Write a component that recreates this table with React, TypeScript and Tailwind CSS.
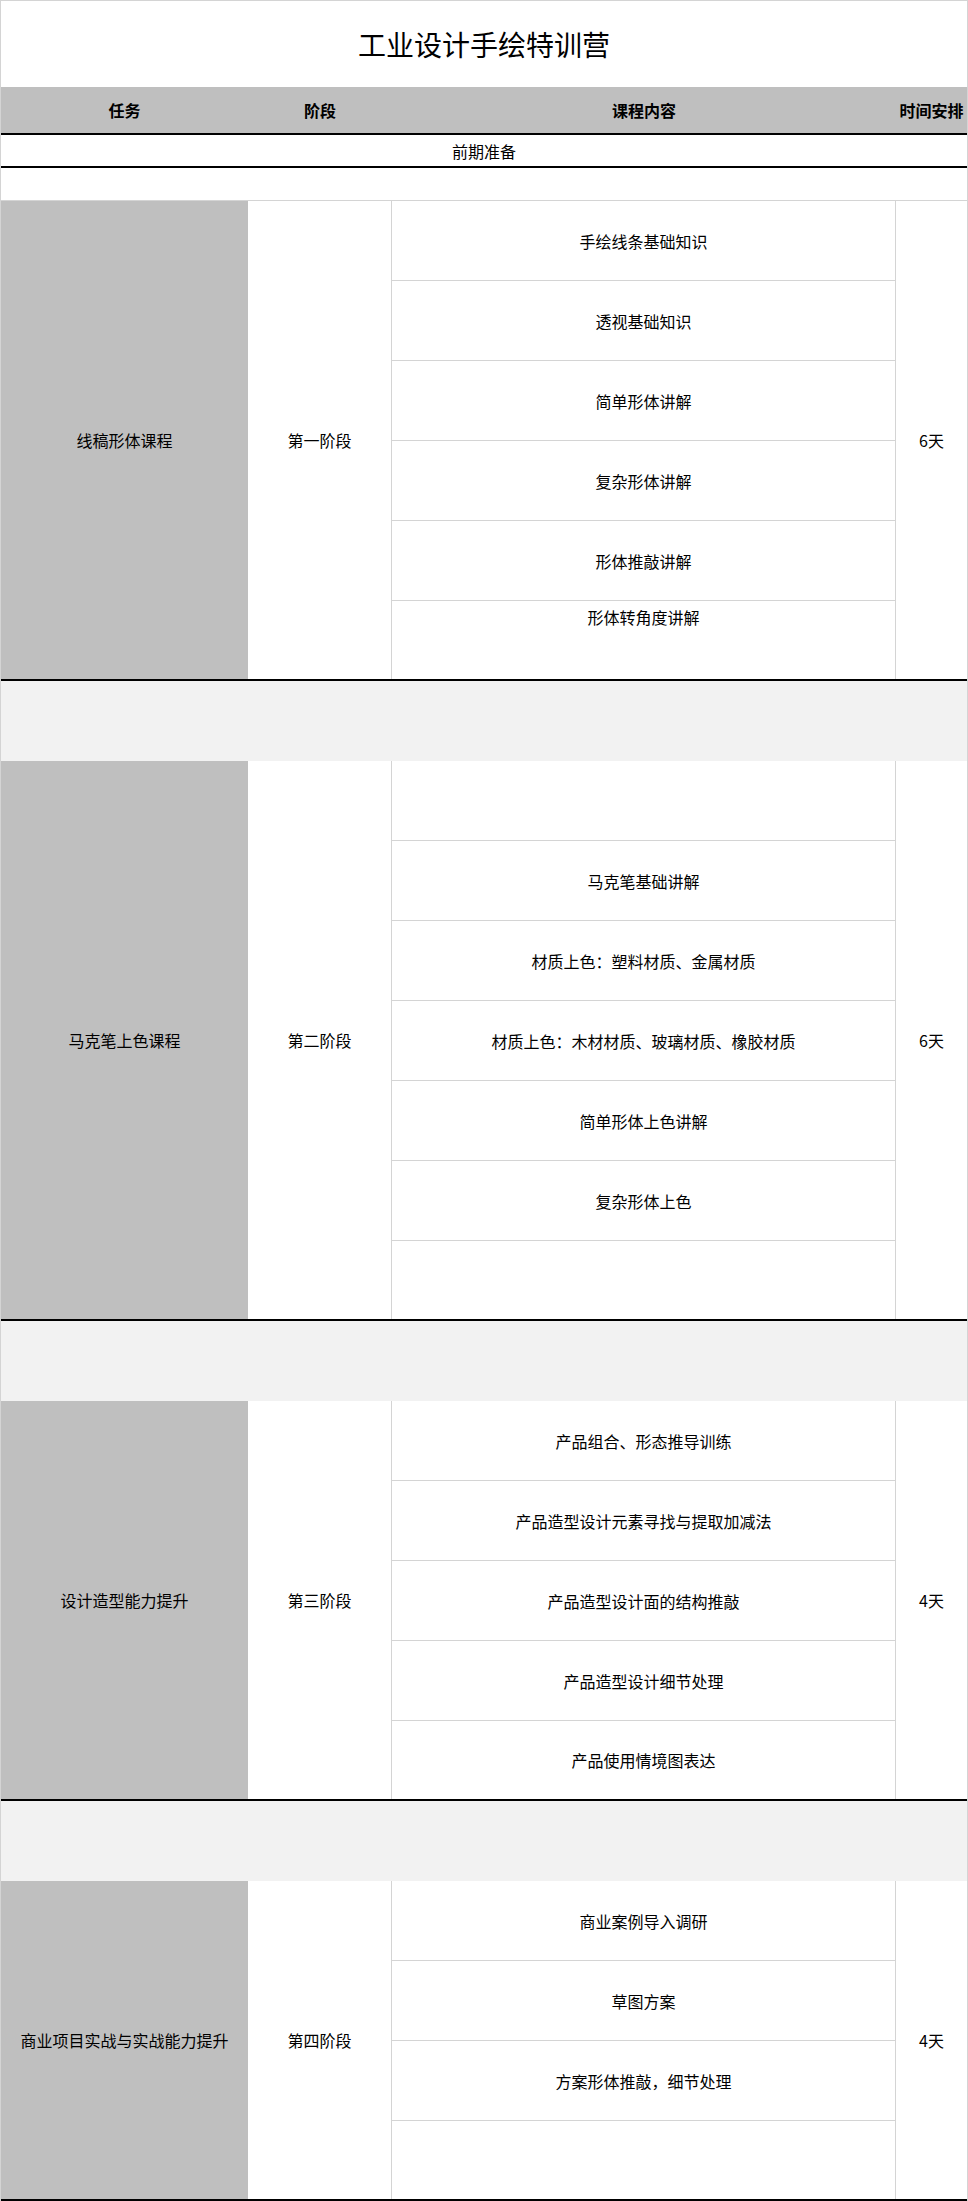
const sections = [
  {
    task: '线稿形体课程',
    stage: '第一阶段',
    days: '6天',
    items: ['手绘线条基础知识', '透视基础知识', '简单形体讲解', '复杂形体讲解', '形体推敲讲解', '形体转角度讲解'],
    lastTop: true,
  },
  {
    task: '马克笔上色课程',
    stage: '第二阶段',
    days: '6天',
    items: ['', '马克笔基础讲解', '材质上色：塑料材质、金属材质', '材质上色：木材材质、玻璃材质、橡胶材质', '简单形体上色讲解', '复杂形体上色', ''],
    lastTop: false,
  },
  {
    task: '设计造型能力提升',
    stage: '第三阶段',
    days: '4天',
    items: ['产品组合、形态推导训练', '产品造型设计元素寻找与提取加减法', '产品造型设计面的结构推敲', '产品造型设计细节处理', '产品使用情境图表达'],
    lastTop: false,
  },
  {
    task: '商业项目实战与实战能力提升',
    stage: '第四阶段',
    days: '4天',
    items: ['商业案例导入调研', '草图方案', '方案形体推敲，细节处理', ''],
    lastTop: false,
  },
];

type Section = (typeof sections)[number];

function SectionBlock({ section }: { section: Section }) {
  const last = section.items.length - 1;
  return (
    <div className="flex">
      {/* 任务 */}
      <div className="w-[247px] bg-[#bfbfbf] flex items-center justify-center">{section.task}</div>
      {/* 阶段 */}
      <div className="w-[144px] border-r border-[#d4d4d4] flex items-center justify-center">{section.stage}</div>
      {/* 课程内容 */}
      <div className="w-[504px] border-r border-[#d4d4d4] flex flex-col">
        {section.items.map((item, i) =>
          i === last ? (
            <div
              key={i}
              className={`h-[78px] flex justify-center ${section.lastTop ? 'items-start pt-[5px]' : 'items-center'}`}
            >
              {item}
            </div>
          ) : (
            <div key={i} className="h-[80px] border-b border-[#d4d4d4] flex items-center justify-center">
              {item}
            </div>
          ),
        )}
      </div>
      {/* 时间安排 */}
      <div className="flex-1 flex items-center justify-center">{section.days}</div>
    </div>
  );
}

export default function App() {
  return (
    <div
      className="w-[968px] bg-white border-t border-l border-r border-[#d4d4d4] text-[16px] leading-[22px] text-black"
      style={{ fontFamily: '"Noto Sans CJK SC", "Noto Sans", sans-serif' }}
    >
      {/* 标题 */}
      <div className="h-[86px] flex items-center justify-center text-[28px] leading-[38px]">工业设计手绘特训营</div>

      {/* 表头 */}
      <div className="h-[46px] bg-[#bfbfbf] flex font-bold">
        <div className="w-[247px] flex items-center justify-center">任务</div>
        <div className="w-[144px] flex items-center justify-center">阶段</div>
        <div className="w-[504px] flex items-center justify-center">课程内容</div>
        <div className="flex-1 flex items-center justify-center whitespace-nowrap">时间安排</div>
      </div>
      <div className="h-[2px] bg-black" />

      <div className="h-[31px] flex items-center justify-center">前期准备</div>
      <div className="h-[2px] bg-black" />
      <div className="h-[33px] border-b border-[#d4d4d4]" />

      {sections.map((section, i) => (
        <div key={i}>
          <SectionBlock section={section} />
          <div className="h-[2px] bg-black" />
          {i < sections.length - 1 && <div className="h-[80px] bg-[#f2f2f2]" />}
        </div>
      ))}
    </div>
  );
}
